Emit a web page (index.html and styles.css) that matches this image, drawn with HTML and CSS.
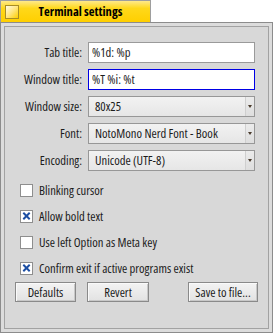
FILE: index.html
```html
<!DOCTYPE html>
<html>
<head>
	<meta charset="utf-8">
	<link rel="stylesheet" href="styles.css">
</head>
<body>

	<div class="tab">
		<span class="close-box"></span>
		<span class="tab-title">Terminal settings</span>
	</div>

	<div class="window">
		<form class="panel">

			<div class="fields">
				<label class="field-label" for="tab_title">Tab title:</label>
				<input type="text" id="tab_title" class="text-field" value="%1d: %p" />

				<label class="field-label" for="window_title">Window title:</label>
				<input type="text" id="window_title" class="text-field focused" value="%T %i: %t" />

				<span class="field-label">Window size:</span>
				<div class="menu-field"><span class="menu-value">80x25</span><span class="menu-arrow"></span></div>

				<span class="field-label">Font:</span>
				<div class="menu-field"><span class="menu-value">NotoMono Nerd Font - Book</span><span class="menu-arrow"></span></div>

				<span class="field-label">Encoding:</span>
				<div class="menu-field"><span class="menu-value">Unicode (UTF-8)</span><span class="menu-arrow"></span></div>
			</div>

			<div class="checks">
				<div class="check-row"><span class="check-box"></span><span>Blinking cursor</span></div>
				<div class="check-row"><span class="check-box checked"></span><span>Allow bold text</span></div>
				<div class="check-row"><span class="check-box"></span><span>Use left Option as Meta key</span></div>
				<div class="check-row"><span class="check-box checked"></span><span>Confirm exit if active programs exist</span></div>
			</div>

			<div class="buttons">
				<button type="button" class="button btn-defaults">Defaults</button>
				<button type="button" class="button btn-revert">Revert</button>
				<button type="button" class="button btn-save">Save to file...</button>
			</div>

		</form>
	</div>

</body>
</html>
```

FILE: styles.css
```css
body {
	margin: 0;
	width: 273px;
	height: 333px;
	overflow: hidden;
	background: #fff;
	font-family: "Open Sans", "DejaVu Sans Condensed", sans-serif;
	font-stretch: condensed;
	font-size: 12.6px;
	color: #1c1c1c;
}

/* yellow window tab */
.tab {
	box-sizing: border-box;
	width: 151px;
	height: 22px;
	display: flex;
	align-items: center;
	padding-left: 4px;
	border: 1px solid #9e9e9e;
	border-bottom: 0;
	background: linear-gradient(#ffe98a, #ffd81a 35%, #ffcf00);
}

.close-box {
	box-sizing: border-box;
	width: 14px;
	height: 14px;
	border: 1px solid #a88d25;
	background: linear-gradient(135deg, #fffbe6, #ffe680 50%, #ffd000);
}

.tab-title {
	flex: 1;
	text-align: center;
	padding-right: 8px;
	font-weight: bold;
	font-size: 12.6px;
	color: #000;
}

/* window frame */
.window {
	box-sizing: border-box;
	height: 311px;
	border: 1px solid #8c8c8c;
	padding: 3px;
	background: #dcdcdc;
}

.panel {
	box-sizing: border-box;
	height: 100%;
	margin: 0;
	border: 1px solid #a2a2a2;
	background: #d8d8d8;
	padding: 15px 15px 0 0;
}

.fields {
	display: grid;
	grid-template-columns: 77px 1fr;
	column-gap: 6px;
	row-gap: 6px;
	align-items: center;
}

.field-label {
	text-align: right;
	white-space: nowrap;
}

.text-field {
	box-sizing: border-box;
	height: 21px;
	margin: 0;
	padding: 0 3px;
	border: 1px solid #9a9a9a;
	background: #fff;
	font: inherit;
	color: #1c1c1c;
	outline: 0;
}

.text-field.focused {
	border-color: #0000e6;
}

.menu-field {
	box-sizing: border-box;
	height: 21px;
	display: flex;
	align-items: center;
	border: 1px solid #979797;
	background: linear-gradient(#f2f2f2, #e6e6e6);
}

.menu-value {
	flex: 1;
	padding-left: 6px;
	white-space: nowrap;
}

.menu-arrow {
	box-sizing: border-box;
	width: 9px;
	height: 19px;
	display: flex;
	align-items: center;
	justify-content: center;
	border-left: 1px solid #cfcfcf;
	background: linear-gradient(#ebebeb, #dedede);
}

.menu-arrow::after {
	content: "";
	border-left: 2px solid transparent;
	border-right: 2px solid transparent;
	border-top: 3px solid #4a3b2c;
}

/* check boxes */
.checks {
	display: flex;
	flex-direction: column;
	gap: 8px;
	padding: 10px 0 0 15px;
}

.check-row {
	height: 18px;
	display: flex;
	align-items: center;
	gap: 6px;
}

.check-box {
	box-sizing: border-box;
	position: relative;
	width: 13px;
	height: 13px;
	border: 1px solid #8e8e8e;
	background: #fff;
}

.check-box.checked::before,
.check-box.checked::after {
	content: "";
	position: absolute;
	left: 1px;
	top: 4px;
	width: 9px;
	height: 2px;
	background: #1d4fa3;
	transform: rotate(45deg);
}

.check-box.checked::after {
	transform: rotate(-45deg);
}

/* bottom buttons */
.buttons {
	display: flex;
	gap: 11px;
	padding: 5px 0 0 10px;
	margin-right: -5px;
}

.button {
	box-sizing: border-box;
	height: 20px;
	margin: 0;
	padding: 0;
	border: 1px solid #8a8a8a;
	box-shadow: inset 1px 1px 0 #fafafa, inset -1px -1px 0 #c8c8c8;
	background: linear-gradient(#f3f3f3, #e2e2e2);
	font: inherit;
	color: #1c1c1c;
	cursor: pointer;
}

.btn-defaults {
	width: 61px;
}

.btn-revert {
	width: 62px;
}

.btn-save {
	width: 70px;
	margin-left: auto;
}
```
